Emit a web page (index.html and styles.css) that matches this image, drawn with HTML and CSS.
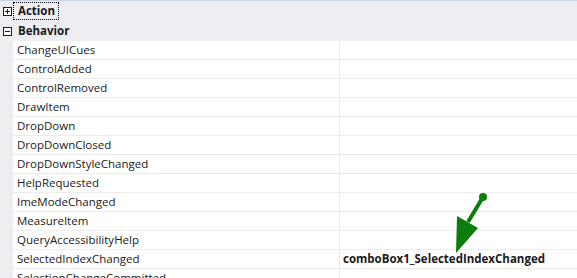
FILE: index.html
```html
<!DOCTYPE html>
<html lang="en">
<head>
	<meta charset="UTF-8">
	<title>Properties</title>
	<link rel="stylesheet" href="styles.css">
</head>
<body>
	<div id="grid">
		<div class="cat">
			<span class="box">
				<svg width="9" height="9" viewBox="0 0 9 9"><rect x="0.5" y="0.5" width="8" height="8" fill="#fff" stroke="#1e1e1e"/><path d="M2 4.5h5M4.5 2v5" stroke="#1e1e1e"/></svg>
			</span>
			<span class="cat_name focus">Action</span>
		</div>
		<div class="cat">
			<span class="box">
				<svg width="9" height="9" viewBox="0 0 9 9"><rect x="0.5" y="0.5" width="8" height="8" fill="#fff" stroke="#1e1e1e"/><path d="M2 4.5h5" stroke="#1e1e1e"/></svg>
			</span>
			<span class="cat_name">Behavior</span>
		</div>
		<div class="row"><span class="gut"></span><span class="name">ChangeUICues</span><span class="val"></span></div>
		<div class="row"><span class="gut"></span><span class="name">ControlAdded</span><span class="val"></span></div>
		<div class="row"><span class="gut"></span><span class="name">ControlRemoved</span><span class="val"></span></div>
		<div class="row"><span class="gut"></span><span class="name">DrawItem</span><span class="val"></span></div>
		<div class="row"><span class="gut"></span><span class="name">DropDown</span><span class="val"></span></div>
		<div class="row"><span class="gut"></span><span class="name">DropDownClosed</span><span class="val"></span></div>
		<div class="row"><span class="gut"></span><span class="name">DropDownStyleChanged</span><span class="val"></span></div>
		<div class="row"><span class="gut"></span><span class="name">HelpRequested</span><span class="val"></span></div>
		<div class="row"><span class="gut"></span><span class="name">ImeModeChanged</span><span class="val"></span></div>
		<div class="row"><span class="gut"></span><span class="name">MeasureItem</span><span class="val"></span></div>
		<div class="row"><span class="gut"></span><span class="name">QueryAccessibilityHelp</span><span class="val"></span></div>
		<div class="row"><span class="gut"></span><span class="name">SelectedIndexChanged</span><span class="val bold">comboBox1_SelectedIndexChanged</span></div>
		<div class="row"><span class="gut"></span><span class="name">SelectionChangeCommitted</span><span class="val"></span></div>

		<svg id="arrow" width="577" height="278" viewBox="0 0 577 278">
			<circle cx="483" cy="197" r="4" fill="#0b7d0b"/>
			<path d="M483 197L468 222" stroke="#0b7d0b" stroke-width="4"/>
			<polygon points="456,253 457,216 478,228" fill="#0b7d0b"/>
		</svg>
	</div>
</body>
</html>
```

FILE: styles.css
```css
*{
	margin: 0;
	padding: 0;
}
body{
	background-color: #fff;
	font-family: "Open Sans", "Noto Sans", sans-serif;
	font-size: 11.5px;
	color: #1a1a1a;
	overflow: hidden;
}
#grid{
	width: 577px;
	height: 278px;
	position: relative;
	border-top: 1px solid #ccd3e8;
	overflow: hidden;
}
.cat{
	height: 20px;
	background-color: #eeeef2;
	display: flex;
	align-items: center;
	font-weight: bold;
}
.box{
	width: 13px;
	display: flex;
	padding-left: 3px;
	box-sizing: border-box;
}
.cat_name{
	padding: 0 3px 0 4px;
	line-height: 16px;
	border: 1px solid transparent;
}
.focus{
	border: 1px dotted #000;
}
.row{
	display: flex;
	height: 19px;
	line-height: 18px;
	border-bottom: 1px solid #ececec;
	box-sizing: border-box;
}
.gut{
	width: 13px;
	background-color: #eeeef2;
}
.name{
	width: 327px;
	padding-left: 4px;
	box-sizing: border-box;
	border-right: 1px solid #ececec;
	white-space: nowrap;
}
.val{
	flex: 1;
	padding-left: 3px;
	white-space: nowrap;
}
.bold{
	font-weight: bold;
}
#arrow{
	position: absolute;
	left: 0;
	top: -1px;
}
```
